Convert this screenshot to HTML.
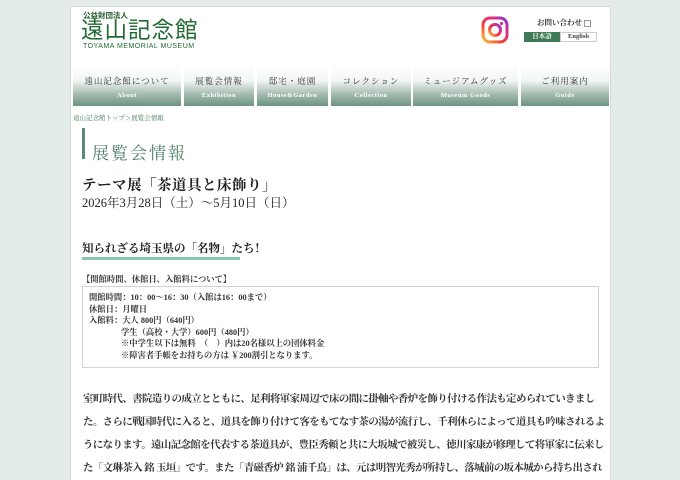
<!DOCTYPE html>
<html><head><meta charset="utf-8"><style>
*{margin:0;padding:0;box-sizing:border-box}
html,body{width:680px;height:480px;overflow:hidden}
body{background:#e4ece9;font-family:"Liberation Serif","Noto Serif CJK SC",serif;color:#222;position:relative}
.wrap{position:absolute;left:70px;top:6px;width:541px;height:474px;background:#fff;border:1px solid #d5ddda;border-bottom:none;overflow:hidden}
.abs{position:absolute;white-space:nowrap}
.nav{position:absolute;left:2px;top:56px;width:536px;height:43px}
.nav div{position:absolute;top:0;height:43px;background:linear-gradient(#fff 0%,#f4f7f5 40%,#9fb8ab 75%,#6e9482 100%);text-align:center}
.nav b{display:block;font-weight:normal;font-size:8.5px;color:#333;margin-top:12px;letter-spacing:1px}
.nav i{display:block;font-style:normal;font-weight:bold;font-size:6.5px;color:#fff;margin-top:5px;letter-spacing:.5px}
.info{font-size:8.3px;line-height:11.5px;font-weight:bold;color:#333}
.body{position:absolute;left:12px;top:381px;width:523px;font-size:10.4px;letter-spacing:-0.55px;line-height:23px;color:#333;font-weight:bold}
</style></head><body>
<div class="wrap">
<div class="abs" style="left:12px;top:3px;font-size:7.5px;color:#1f5a2e;font-family:'Liberation Sans','Noto Sans CJK JP',sans-serif;font-weight:bold">公益財団法人</div>
<div class="abs" style="left:10px;top:11px;font-size:22.5px;color:#1f6a32;font-family:'Liberation Sans','Noto Sans CJK JP',sans-serif;letter-spacing:1px;line-height:25px">遠山記念館</div>
<div class="abs" style="left:12px;top:36px;font-size:7px;color:#1f6a32;font-family:'Liberation Sans',sans-serif;letter-spacing:.5px">TOYAMA MEMORIAL MUSEUM</div>
<svg class="abs" style="left:410px;top:9px" width="28" height="28" viewBox="0 0 28 28"><defs><linearGradient id="g" x1="0" y1="1" x2="1" y2="0"><stop offset="0" stop-color="#fcc23a"/><stop offset=".4" stop-color="#f3373b"/><stop offset=".75" stop-color="#d62f8c"/><stop offset="1" stop-color="#7a3cd6"/></linearGradient></defs><rect x="2" y="2" width="24" height="24" rx="7" fill="none" stroke="url(#g)" stroke-width="3"/><circle cx="14" cy="14" r="5.5" fill="none" stroke="url(#g)" stroke-width="3"/><circle cx="20.5" cy="7.5" r="1.6" fill="#d62f8c"/></svg>
<div class="abs" style="left:466px;top:10px;font-size:7.5px;font-weight:bold;color:#333">お問い合わせ <span style="display:inline-block;width:7px;height:7px;border:1px solid #999;vertical-align:middle"></span></div>
<div class="abs" style="left:453px;top:25px;width:36px;height:10px;background:#3d7a55;color:#fff;font-size:6.5px;text-align:center;line-height:10px;font-weight:bold">日本語</div>
<div class="abs" style="left:489px;top:25px;width:37px;height:10px;border:1px solid #ccc;color:#444;font-size:6.5px;text-align:center;line-height:8px;font-weight:bold">English</div>
<div class="nav">
<div style="left:0;width:108px"><b>遠山記念館について</b><i>About</i></div>
<div style="left:111px;width:70px"><b>展覧会情報</b><i>Exhibition</i></div>
<div style="left:184px;width:71px"><b>邸宅・庭園</b><i>House&amp;Garden</i></div>
<div style="left:258px;width:80px"><b>コレクション</b><i>Collection</i></div>
<div style="left:340px;width:105px"><b>ミュージアムグッズ</b><i>Museum Goods</i></div>
<div style="left:448px;width:88px"><b>ご利用案内</b><i>Guide</i></div>
</div>
<div class="abs" style="left:2px;top:106px;font-size:6.5px;color:#3d7a55">遠山記念館トップ＞展覧会情報</div>
<div class="abs" style="left:11px;top:121px;width:3px;height:31px;background:#5a8a72"></div>
<div class="abs" style="left:21px;top:132px;font-size:17px;color:#4f8068;letter-spacing:2px">展覧会情報</div>
<div class="abs" style="left:11px;top:167px;font-size:14.5px;font-weight:bold;color:#222;letter-spacing:.5px">テーマ展「茶道具と床飾り」</div>
<div class="abs" style="left:11px;top:186px;font-size:12.5px;color:#222">2026年3月28日（土）～5月10日（日）</div>
<div class="abs" style="left:11px;top:235px;font-size:11.5px;font-weight:bold;color:#222;border-bottom:3px solid #86c9ac;line-height:15px;width:158px">知られざる埼玉県の「名物」たち！</div>
<div class="abs info" style="left:11px;top:267px">【開館時間、休館日、入館料について】</div>
<div class="abs info" style="left:11px;top:279px;width:517px;border:1px solid #d3d3d3;padding:5px 0 0 6px;height:82px">開館時間：10：00～16：30（入館は16：00まで）<br>休館日：月曜日<br>入館料：大人 800円（640円）<br><span style="padding-left:32px">学生（高校・大学）600円（480円）</span><br><span style="padding-left:32px">※中学生以下は無料　（　）内は20名様以上の団体料金</span><br><span style="padding-left:32px">※障害者手帳をお持ちの方は ￥200割引となります。</span></div>
<div class="body">室町時代、書院造りの成立とともに、足利将軍家周辺で床の間に掛軸や香炉を飾り付ける作法も定められていきました。さらに戦国時代に入ると、道具を飾り付けて客をもてなす茶の湯が流行し、千利休らによって道具も吟味されるようになります。遠山記念館を代表する茶道具が、豊臣秀頼と共に大坂城で被災し、徳川家康が修理して将軍家に伝来した「文琳茶入 銘 玉垣」です。また「青磁香炉 銘 浦千鳥」は、元は明智光秀が所持し、落城前の坂本城から持ち出されたとされるものです。また今回は、遠山記念館で所蔵する長次郎の黒楽茶碗「禅」と「大黒像」を並べて展示します。</div>
</div>
</body></html>
